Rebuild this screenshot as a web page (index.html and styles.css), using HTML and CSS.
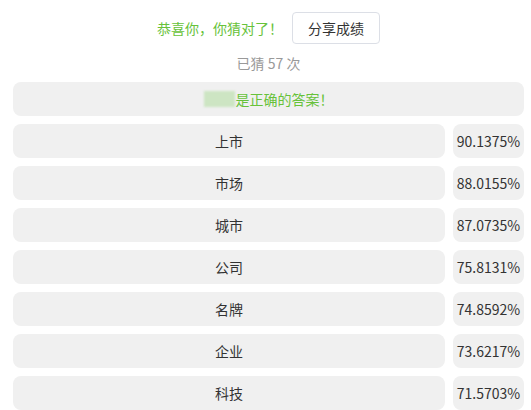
FILE: index.html
```html
<!DOCTYPE html>
<html lang="zh">
<head>
<meta charset="utf-8">
<link rel="stylesheet" href="styles.css">
</head>
<body>
<div class="page">
  <div class="head">
    <span class="win">恭喜你，你猜对了！</span>
    <button class="share">分享成绩</button>
  </div>
  <div class="count">已猜 57 次</div>
  <div class="answer"><span class="mask"></span>是正确的答案！</div>
  <div class="list">
    <div class="row"><div class="word">上市</div><div class="pct">90.1375%</div></div>
    <div class="row"><div class="word">市场</div><div class="pct">88.0155%</div></div>
    <div class="row"><div class="word">城市</div><div class="pct">87.0735%</div></div>
    <div class="row"><div class="word">公司</div><div class="pct">75.8131%</div></div>
    <div class="row"><div class="word">名牌</div><div class="pct">74.8592%</div></div>
    <div class="row"><div class="word">企业</div><div class="pct">73.6217%</div></div>
    <div class="row"><div class="word">科技</div><div class="pct">71.5703%</div></div>
  </div>
</div>
</body>
</html>
```
FILE: styles.css
```css
html, body {
  margin: 0;
  padding: 0;
  background: #fff;
}
body {
  font-family: "Noto Sans CJK SC", "Noto Sans", sans-serif;
  font-size: 14px;
  color: #333;
}
.page {
  padding: 12px 7px 0 13px;
}
.head {
  display: flex;
  justify-content: center;
  align-items: center;
  gap: 9px;
  height: 32px;
}
.win {
  color: #67c23a;
  line-height: 20px;
}
.share {
  height: 32px;
  padding: 0 15px;
  border: 1px solid #dcdfe6;
  border-radius: 4px;
  background: #fff;
  font-family: inherit;
  font-size: 14px;
  color: #333;
}
.count {
  margin-top: 9px;
  line-height: 20px;
  text-align: center;
  color: #999;
}
.answer {
  margin-top: 9px;
  height: 34px;
  border-radius: 8px;
  background: #f0f0f0;
  display: flex;
  justify-content: center;
  align-items: center;
  color: #67c23a;
}
.mask {
  display: inline-block;
  width: 31px;
  height: 16px;
  margin-right: 1px;
  background: #cde5c3;
  filter: blur(1px);
}
.list {
  margin-top: 8px;
  display: flex;
  flex-direction: column;
  gap: 8px;
}
.row {
  display: flex;
  gap: 8px;
  height: 34px;
}
.word, .pct {
  background: #f0f0f0;
  border-radius: 8px;
  display: flex;
  justify-content: center;
  align-items: center;
  white-space: nowrap;
}
.word {
  flex: 1;
}
.pct {
  width: 71px;
}
```
